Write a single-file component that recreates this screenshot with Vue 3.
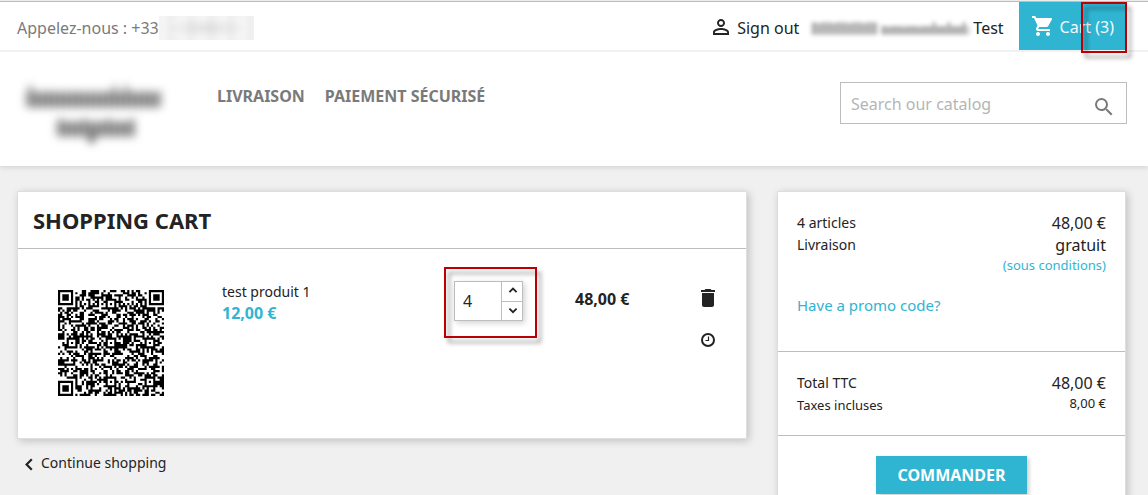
<script setup>
import { ref } from 'vue'

const quantity = ref(4)
const search = ref('')

const SIZE = 49
const centres = [6, 24, 42]

function buildCode() {
  let seed = 20483
  const next = () => {
    seed = (seed * 1103515245 + 12345) % 2147483648
    return seed / 2147483648
  }
  const grid = Array.from({ length: SIZE }, () =>
    Array.from({ length: SIZE }, () => next() > 0.48)
  )
  const stamp = (cx, cy, radius, light) => {
    for (let y = cy - radius; y <= cy + radius; y++) {
      for (let x = cx - radius; x <= cx + radius; x++) {
        if (x < 0 || y < 0 || x >= SIZE || y >= SIZE) continue
        const ring = Math.max(Math.abs(x - cx), Math.abs(y - cy))
        grid[y][x] = !light.includes(ring)
      }
    }
  }
  for (let i = 8; i < SIZE - 8; i++) {
    grid[6][i] = i % 2 === 0
    grid[i][6] = i % 2 === 0
  }
  for (const y of centres) {
    for (const x of centres) stamp(x, y, 2, [1])
  }
  stamp(3, 3, 4, [2, 4])
  stamp(SIZE - 4, 3, 4, [2, 4])
  stamp(3, SIZE - 4, 4, [2, 4])
  let d = ''
  grid.forEach((row, y) => row.forEach((on, x) => {
    if (on) d += `M${x} ${y}h1v1h-1z`
  }))
  return d
}
const codePath = buildCode()

const bars = (start, end, step, heights) => {
  const out = []
  for (let x = start, i = 0; x < end; x += step, i++) {
    out.push({ x, h: heights[i % heights.length] })
  }
  return out
}
const logoTop = bars(11, 141, 6, [23, 15, 14, 16, 14, 15, 14, 14, 15, 14, 14, 14, 14, 15, 23, 14])
const logoBottom = bars(41, 115, 6, [19, 14, 15, 14])
const nameBars = [
  ...bars(4, 68, 5, [13, 12, 13]),
  ...bars(74, 124, 5, [9, 8, 9]),
  ...bars(124, 160, 5, [13, 9, 9])
]
</script>

<template>
  <div class="page">
    <header class="header">
      <nav class="topbar">
        <div class="contact">
          <span>Appelez-nous : +33</span>
          <span class="phone-mask"></span>
        </div>
        <div class="account">
          <a href="#" class="user-link">
            <svg class="icon-user" viewBox="0 0 24 24" aria-hidden="true">
              <path d="M12 5.9a2.1 2.1 0 1 1 0 4.2 2.1 2.1 0 0 1 0-4.2m0 9c2.97 0 6.1 1.46 6.1 2.1v1.1H5.9V17c0-.64 3.13-2.1 6.1-2.1M12 4C9.79 4 8 5.79 8 8s1.79 4 4 4 4-1.79 4-4-1.79-4-4-4m0 9c-2.67 0-8 1.34-8 4v3h16v-3c0-2.66-5.33-4-8-4" />
            </svg>
            <span>Sign out</span>
          </a>
          <a href="#" class="profile">
            <svg class="name-mask" viewBox="0 0 160 24" aria-hidden="true">
              <rect x="2" y="7" width="68" height="11" fill="#aaa" opacity=".4" />
              <rect x="72" y="10" width="86" height="8" fill="#999" opacity=".4" />
              <rect v-for="(b, i) in nameBars" :key="i" :x="b.x" :y="19 - b.h" width="2" :height="b.h" fill="#444" opacity=".6" />
            </svg>
            <span>Test</span>
          </a>
          <a href="#" class="cart-link">
            <svg class="icon-cart" viewBox="0 0 24 24" aria-hidden="true">
              <path d="M7 18c-1.1 0-1.99.9-1.99 2S5.900 22 7 22s2-.9 2-2-.9-2-2-2M1 2v2h2l3.600 7.590-1.350 2.450c-.16.28-.25.61-.25.960 0 1.100.9 2 2 2h12v-2H7.420c-.14 0-.25-.11-.25-.25l.03-.12.900-1.630h7.450c.75 0 1.410-.41 1.750-1.030l3.580-6.490c.08-.14.120-.31.120-.48 0-.55-.45-1-1-1H5.210l-.94-2zm16 16c-1.1 0-1.990.9-1.990 2s.89 2 1.990 2 2-.9 2-2-.9-2-2-2" />
            </svg>
            <span>Cart (3)</span>
            <span class="mark mark-cart"></span>
          </a>
        </div>
      </nav>
      <div class="brand-row">
        <a href="#" class="logo" aria-label="Home">
          <svg viewBox="0 0 152 76" aria-hidden="true">
            <rect x="7" y="17" width="137" height="16" fill="#888" opacity=".6" />
            <rect v-for="(b, i) in logoTop" :key="'t' + i" :x="b.x" :y="34 - b.h" width="3" :height="b.h" fill="#333" opacity=".6" />
            <rect x="38" y="47" width="79" height="15" fill="#888" opacity=".6" />
            <rect v-for="(b, i) in logoBottom" :key="'b' + i" :x="b.x" :y="63 - b.h" width="3" :height="b.h" fill="#333" opacity=".6" />
            <rect x="70" y="58" width="7" height="11" fill="#777" />
          </svg>
        </a>
        <div class="menu">
          <a href="#">LIVRAISON</a>
          <a href="#">PAIEMENT SÉCURISÉ</a>
        </div>
        <form class="search" @submit.prevent>
          <input v-model="search" type="text" placeholder="Search our catalog" aria-label="Search our catalog" />
          <button type="submit" aria-label="Search">
            <svg viewBox="0 0 24 24" aria-hidden="true">
              <path d="M15.500 14h-.79l-.28-.27A6.470 6.470 0 0 0 16 9.500 6.500 6.500 0 1 0 9.500 16c1.610 0 3.090-.59 4.230-1.570l.27.280v.790l5 4.990L20.490 19zm-6 0C7.010 14 5 11.990 5 9.500S7.010 5 9.500 5 14 7.010 14 9.500 11.990 14 9.500 14" />
            </svg>
          </button>
        </form>
      </div>
    </header>

    <main class="content">
      <section class="main-col">
        <div class="card">
          <h1>SHOPPING CART</h1>
          <div class="item">
            <svg class="qr" viewBox="0 0 49 49" role="img" aria-label="test produit 1">
              <path :d="codePath" />
            </svg>
            <div class="product">
              <a href="#">test produit 1</a>
              <strong>12,00 €</strong>
            </div>
            <div class="qty">
              <input v-model.number="quantity" type="text" inputmode="numeric" aria-label="Quantity" />
              <div class="steps">
                <button type="button" aria-label="Increase" @click="quantity++">
                  <svg viewBox="0 0 10 10" aria-hidden="true"><path d="M2 6l3-3 3 3" /></svg>
                </button>
                <button type="button" aria-label="Decrease" @click="quantity--">
                  <svg viewBox="0 0 10 10" aria-hidden="true"><path d="M2 3l3 3 3-3" /></svg>
                </button>
              </div>
              <span class="mark mark-qty"></span>
            </div>
            <strong class="line-price">48,00 €</strong>
            <div class="actions">
              <button type="button" aria-label="Remove">
                <svg class="icon-trash" viewBox="0 0 24 24" aria-hidden="true">
                  <path d="M6 19c0 1.100.9 2 2 2h8c1.100 0 2-.9 2-2V7H6zM19 4h-3.500l-1-1h-5l-1 1H5v2h14z" />
                </svg>
              </button>
              <button type="button" aria-label="Save for later">
                <svg class="icon-clock" viewBox="0 0 16 16" aria-hidden="true">
                  <circle cx="8" cy="8" r="6" fill="none" stroke="#232323" stroke-width="2" />
                  <path d="M8.500 4.500v4h-3" fill="none" stroke="#232323" stroke-width="1.200" />
                </svg>
              </button>
            </div>
          </div>
        </div>
        <a href="#" class="continue">
          <svg viewBox="0 0 24 24" aria-hidden="true"><path d="M14.800 7.200 9.600 12.500l5.200 5.300" /></svg>
          <span>Continue shopping</span>
        </a>
      </section>

      <aside class="card summary">
        <div class="block first">
          <div class="row"><span>4 articles</span><span class="value">48,00 €</span></div>
          <div class="row"><span>Livraison</span><span class="value">gratuit</span></div>
          <a href="#" class="conditions">(sous conditions)</a>
          <a href="#" class="promo">Have a promo code?</a>
        </div>
        <div class="block totals">
          <div class="row"><span>Total TTC</span><span class="value">48,00 €</span></div>
          <div class="row tax"><span>Taxes incluses</span><span class="tax-value">8,00 €</span></div>
        </div>
        <div class="block checkout">
          <button type="button">COMMANDER</button>
        </div>
      </aside>
    </main>
  </div>
</template>

<style>
body {
  background: #f0f0f0;
  overflow: hidden;
}
</style>

<style scoped>
* {
  box-sizing: border-box;
}
.page {
  font-family: "Noto Sans", sans-serif;
  font-size: 14px;
  line-height: 22px;
  color: #232323;
  border-top: 1px solid #f0f0f0;
}
a {
  color: inherit;
  text-decoration: none;
}
button,
input {
  font: inherit;
  color: inherit;
  margin: 0;
  padding: 0;
  border: 0;
  background: none;
  outline: 0;
}
svg {
  display: block;
  flex: none;
}
.header {
  background: #fff;
  border-top: 1px solid #bdbdbd;
  box-shadow: 0 2px 5px rgba(0, 0, 0, 0.11);
}
.topbar {
  display: flex;
  justify-content: space-between;
  height: 50px;
  padding: 0 21px 0 17px;
  border-bottom: 2px solid #f1f1f1;
  font-size: 16px;
}
.contact,
.account,
.user-link,
.profile,
.cart-link {
  display: flex;
  align-items: center;
}
.contact {
  color: #7a7a7a;
  padding-top: 4px;
}
.phone-mask {
  width: 95px;
  height: 24px;
  background: radial-gradient(ellipse 44% 42%, rgba(0, 0, 0, 0.07), rgba(0, 0, 0, 0)), repeating-linear-gradient(90deg, rgba(0, 0, 0, 0) 0 6px, rgba(0, 0, 0, 0.02) 10px 14px, rgba(0, 0, 0, 0) 20px), #f4f4f4;
}
.account {
  align-items: stretch;
}
.user-link,
.profile {
  padding-top: 4px;
}
.icon-user {
  width: 24px;
  height: 24px;
  margin: 0 4px 2px 0;
  fill: #232323;
}
.name-mask {
  width: 160px;
  height: 24px;
  margin: 0 4px 0 10px;
  filter: blur(2px);
}
.cart-link {
  position: relative;
  margin-left: 15px;
  padding: 2px 13px 0 12px;
  gap: 5px;
  background: #2fb5d2;
  color: #f5fbfc;
}
.icon-cart {
  width: 24px;
  height: 24px;
  margin-bottom: 2px;
  fill: #fff;
}
.mark {
  position: absolute;
  border: 2px solid #b90005;
  filter: drop-shadow(4px 5px 2px rgba(0, 0, 0, 0.4));
  pointer-events: none;
}
.mark-cart {
  top: 0;
  right: 0;
  width: 46px;
  height: 51px;
}
.brand-row {
  display: flex;
  align-items: flex-start;
  height: 114px;
  padding: 0 21px 0 18px;
}
.logo {
  width: 152px;
  margin-top: 22px;
}
.logo svg {
  width: 152px;
  height: 76px;
  filter: blur(4px);
}
.menu {
  display: flex;
  gap: 20px;
  margin: 33px auto 0 47px;
  font-size: 16px;
  font-weight: 700;
  color: #7a7a7a;
}
.search {
  display: flex;
  align-items: center;
  width: 287px;
  height: 42px;
  margin-top: 30px;
  border: 1px solid #bdbdbd;
}
.search input {
  flex: 1;
  min-width: 0;
  padding: 2px 0 0 10px;
  font-size: 16px;
}
.search input::placeholder {
  color: #b5b5b5;
  opacity: 1;
}
.search button {
  padding: 8px 10px 0 0;
}
.search svg {
  width: 24px;
  height: 24px;
  fill: #7a7a7a;
}
.content {
  display: grid;
  grid-template-columns: 730fr 349fr;
  gap: 30px;
  align-items: start;
  padding: 25px 22px 0 17px;
}
.card {
  background: #fff;
  border: 1px solid #dedede;
  box-shadow: 2px 2px 8px rgba(0, 0, 0, 0.2);
}
h1 {
  margin: 0;
  padding: 14px 15px 13px;
  font-size: 22px;
  line-height: 29px;
  font-weight: 700;
  border-bottom: 1px solid #bdbdbd;
}
.item {
  display: grid;
  grid-template-columns: 204fr 232fr 121fr 109fr 62fr;
  align-items: start;
  min-height: 189px;
  padding-top: 32px;
}
.qr {
  width: 106px;
  height: 106px;
  margin: 9px 0 0 40px;
}
.product {
  display: flex;
  flex-direction: column;
}
.product strong {
  line-height: 20px;
  color: #2fb5d2;
}
.product strong,
.line-price {
  font-size: 16px;
}
.line-price {
  padding-top: 7px;
}
.qty {
  position: relative;
  display: flex;
  width: 69px;
  height: 40px;
  border: 1px solid #bdbdbd;
  box-shadow: 2px 2px 6px rgba(0, 0, 0, 0.18);
}
.qty input {
  flex: 1;
  min-width: 0;
  padding-left: 8px;
  font-size: 16px;
}
.steps {
  display: flex;
  flex-direction: column;
  width: 21px;
  border-left: 1px solid #bdbdbd;
}
.steps button {
  display: flex;
  flex: 1;
  align-items: center;
  justify-content: center;
  padding-left: 2px;
}
.steps button + button {
  border-top: 1px solid #bdbdbd;
}
.steps svg {
  width: 12px;
  height: 12px;
  fill: none;
  stroke: #232323;
  stroke-width: 1.5;
}
.mark-qty {
  top: -15px;
  left: -11px;
  width: 93px;
  height: 71px;
}
.actions {
  display: flex;
  flex-direction: column;
  align-items: center;
  gap: 22px;
  padding: 5px 14px 0 0;
}
.icon-trash {
  width: 24px;
  height: 24px;
  fill: #232323;
}
.icon-clock {
  width: 16px;
  height: 16px;
}
.continue {
  display: inline-flex;
  align-items: center;
  margin-top: 11px;
}
.continue svg {
  width: 24px;
  height: 24px;
  margin-top: 2px;
  fill: none;
  stroke: #232323;
  stroke-width: 2.2;
}
.block {
  display: flex;
  flex-direction: column;
  padding: 0 19px;
}
.block + .block {
  border-top: 1px solid #bdbdbd;
}
.row {
  display: flex;
  justify-content: space-between;
}
.value {
  font-size: 16px;
}
.first {
  padding-top: 20px;
  padding-bottom: 34px;
}
.conditions {
  align-self: flex-end;
  font-size: 13px;
  line-height: 18px;
  color: #2fb5d2;
}
.promo {
  align-self: flex-start;
  margin-top: 19px;
  font-size: 15px;
  line-height: 24px;
  color: #2fb5d2;
}
.totals {
  padding-top: 20px;
  padding-bottom: 19px;
}
.tax {
  font-size: 13px;
}
.tax-value {
  line-height: 18px;
}
.checkout {
  padding-top: 20px;
  padding-bottom: 20px;
}
.checkout button {
  align-self: center;
  padding: 8px 21px;
  background: #2fb5d2;
  color: #fff;
  font-size: 16px;
  font-weight: 700;
  box-shadow: 2px 2px 4px rgba(0, 0, 0, 0.2);
}
</style>
